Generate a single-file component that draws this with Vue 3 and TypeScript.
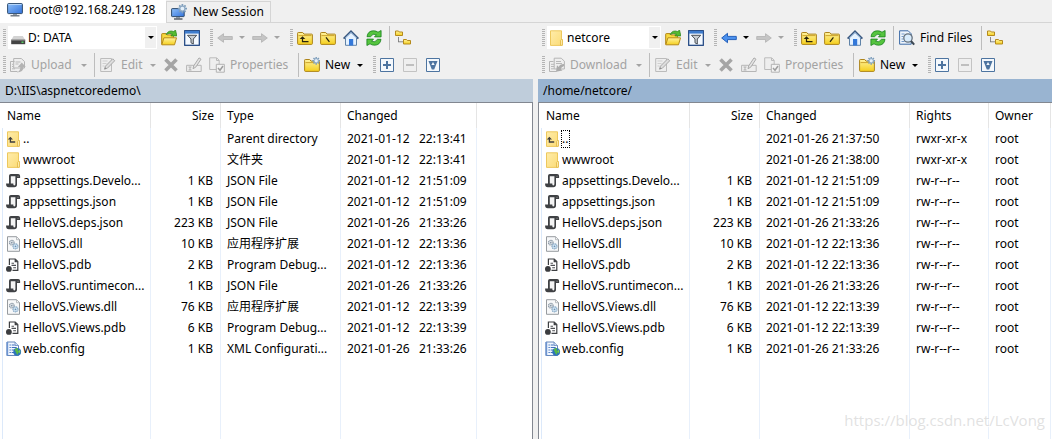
<script setup lang="ts">
type Kind = 'parent' | 'folder' | 'json' | 'dll' | 'pdb' | 'config'

interface Tool {
  id: string
  icon?: string
  label?: string
  title?: string
  width?: string
  caret?: boolean
  off?: boolean
  kind: 'grip' | 'sep' | 'button' | 'combo'
}

interface Column {
  key: string
  label: string
  width: string
}

interface Row {
  kind: Kind
  [key: string]: string
}

interface Pane {
  id: string
  active: boolean
  path: string
  drive: string
  driveIcon: string
  top: Tool[]
  bottom: Tool[]
  columns: Column[]
  rows: Row[]
}

const grip = (id: string): Tool => ({ id, kind: 'grip' })
const sep = (id: string): Tool => ({ id, kind: 'sep' })
const btn = (icon: string, title: string, extra: Partial<Tool> = {}): Tool => ({
  id: icon + title,
  kind: 'button',
  icon,
  title,
  ...extra,
})

function topBar(back: boolean, root: string, find: boolean): Tool[] {
  return [
    grip('g1'),
    { id: 'combo', kind: 'combo' },
    btn('open', 'Open directory'),
    btn('filter', 'Filter'),
    grip('g2'),
    btn(back ? 'back' : 'back-off', 'Back', { caret: true, off: !back, width: 'w-nav' }),
    btn('forward-off', 'Forward', { caret: true, off: true, width: 'w-nav' }),
    grip('g3'),
    btn('up', 'Parent directory'),
    btn(root, 'Root directory'),
    btn('home', 'Home directory'),
    btn('refresh', 'Refresh'),
    sep('s1'),
    ...(find ? [btn('find', 'Find', { label: 'Find Files', width: 'w-find' }), sep('s2')] : []),
    btn('tree', 'Synchronize browsing'),
  ]
}

function bottomBar(icon: string, label: string, width: string): Tool[] {
  return [
    grip('g1'),
    btn(icon, label, { label, width, caret: true, off: true }),
    sep('s1'),
    btn('edit', 'Edit', { label: 'Edit', width: 'w-edit', caret: true, off: true }),
    btn('delete', 'Delete', { off: true }),
    btn('rename', 'Rename', { off: true }),
    btn('props', 'Properties', { label: 'Properties', width: 'w-props', off: true }),
    sep('s2'),
    btn('new-folder', 'New', { label: 'New', width: 'w-new', caret: true }),
    grip('g2'),
    btn('plus', 'Select'),
    btn('minus', 'Unselect', { off: true }),
    btn('invert', 'Invert selection'),
  ]
}

const files: [Kind, string, string, string, string, string][] = [
  ['json', 'appsettings.Develo...', '1 KB', 'JSON File', '2021-01-12', '21:51:09'],
  ['json', 'appsettings.json', '1 KB', 'JSON File', '2021-01-12', '21:51:09'],
  ['json', 'HelloVS.deps.json', '223 KB', 'JSON File', '2021-01-26', '21:33:26'],
  ['dll', 'HelloVS.dll', '10 KB', '应用程序扩展', '2021-01-12', '22:13:36'],
  ['pdb', 'HelloVS.pdb', '2 KB', 'Program Debug...', '2021-01-12', '22:13:36'],
  ['json', 'HelloVS.runtimecon...', '1 KB', 'JSON File', '2021-01-26', '21:33:26'],
  ['dll', 'HelloVS.Views.dll', '76 KB', '应用程序扩展', '2021-01-12', '22:13:39'],
  ['pdb', 'HelloVS.Views.pdb', '6 KB', 'Program Debug...', '2021-01-12', '22:13:39'],
  ['config', 'web.config', '1 KB', 'XML Configurati...', '2021-01-26', '21:33:26'],
]

const panes: Pane[] = [
  {
    id: 'local',
    active: false,
    path: 'D:\\IIS\\aspnetcoredemo\\',
    drive: 'D: DATA',
    driveIcon: 'drive',
    top: topBar(false, 'root-local', false),
    bottom: bottomBar('upload', 'Upload', 'w-upload'),
    columns: [
      { key: 'name', label: 'Name', width: 'c-name' },
      { key: 'size', label: 'Size', width: 'c-size' },
      { key: 'type', label: 'Type', width: 'c-type' },
      { key: 'changed', label: 'Changed', width: 'c-changed-local' },
    ],
    rows: [
      { kind: 'parent', name: '..', size: '', type: 'Parent directory', changed: '2021-01-12   22:13:41' },
      { kind: 'folder', name: 'wwwroot', size: '', type: '文件夹', changed: '2021-01-12   22:13:41' },
      ...files.map(([kind, name, size, type, date, time]): Row => ({
        kind, name, size, type, changed: `${date}   ${time}`,
      })),
    ],
  },
  {
    id: 'remote',
    active: true,
    path: '/home/netcore/',
    drive: 'netcore',
    driveIcon: 'folder',
    top: topBar(true, 'root-remote', true),
    bottom: bottomBar('download', 'Download', 'w-download'),
    columns: [
      { key: 'name', label: 'Name', width: 'c-name' },
      { key: 'size', label: 'Size', width: 'c-size' },
      { key: 'changed', label: 'Changed', width: 'c-changed-remote' },
      { key: 'rights', label: 'Rights', width: 'c-rights' },
      { key: 'owner', label: 'Owner', width: 'c-owner' },
    ],
    rows: [
      { kind: 'parent', name: '..', size: '', changed: '2021-01-26 21:37:50', rights: 'rwxr-xr-x', owner: 'root' },
      { kind: 'folder', name: 'wwwroot', size: '', changed: '2021-01-26 21:38:00', rights: 'rwxr-xr-x', owner: 'root' },
      ...files.map(([kind, name, size, , date, time]): Row => ({
        kind, name, size, changed: `${date} ${time}`, rights: 'rw-r--r--', owner: 'root',
      })),
    ],
  },
]
</script>

<template>
  <div class="app">
    <svg class="defs" width="0" height="0" aria-hidden="true">
      <defs>
        <linearGradient id="gy" x1="0" y1="0" x2="0" y2="1">
          <stop offset="0" stop-color="#fff3a0" /><stop offset="1" stop-color="#f5cf1c" />
        </linearGradient>
        <linearGradient id="gs" x1="0" y1="0" x2="1" y2="1">
          <stop offset="0" stop-color="#8fc0f8" /><stop offset="1" stop-color="#3272dc" />
        </linearGradient>
        <linearGradient id="gf" x1="0" y1="0" x2="1" y2="1">
          <stop offset="0" stop-color="#ffecaa" /><stop offset="1" stop-color="#fbdc78" />
        </linearGradient>
        <g id="ybase">
          <path d="M.6 13.4V3.2q0-.7.7-.7h4.4l1.3 1.6h7.7q.7 0 .7.7v8.6q0 1-.9 1H1.4q-.8 0-.8-1z" fill="url(#gy)" stroke="#ad841c" />
          <path d="M1.5 5.6h13" stroke="#c79d25" stroke-width=".9" />
        </g>
        <g id="gear">
          <path d="M0-4.6V4.6M-4.6 0H4.6M-3.2-3.2 3.2 3.2M-3.2 3.2 3.2-3.2" stroke="#7d9dbb" stroke-width="1.7" />
          <circle r="2.5" fill="#e4f0fa" stroke="#8faac4" stroke-width="1.1" />
        </g>
        <g id="mini">
          <path d="M.5 6V1.5h3l.8 1h3.2V6z" fill="url(#gy)" stroke="#b58a1c" />
        </g>
      </defs>

      <symbol id="i-monitor" viewBox="0 0 16 16">
        <rect x=".6" y="1.6" width="14.8" height="10" rx=".8" fill="url(#gs)" stroke="#2f4c6d" />
        <path d="M1.5 2.5h13" stroke="#b5d6fb" />
        <path d="M6 12h4v1.5H6z" fill="#8e98a3" /><path d="M3.5 13.8h9" stroke="#606a75" stroke-width="1.3" />
      </symbol>
      <symbol id="i-monitor-new" viewBox="0 0 16 16">
        <rect x=".6" y="4.6" width="12.6" height="8" rx=".6" fill="url(#gs)" stroke="#2f4c6d" />
        <path d="M5 13h4v1.4H5z" fill="#8e98a3" /><path d="M3 15h8.5" stroke="#404a55" stroke-width="1.3" />
        <g transform="translate(11.4 4.6)"><use href="#gear" /></g>
      </symbol>
      <symbol id="i-drive" viewBox="0 0 16 16">
        <path d="M3.6 6h9.2l2.4 4H1.2z" fill="#d3d3d3" /><path d="M1.2 9.8h14v4.4h-14z" fill="#444" />
        <path d="M1.2 10h14" stroke="#999" /><path d="M11.5 12.2h2" stroke="#5be466" stroke-width="1.3" />
      </symbol>
      <symbol id="i-folder" viewBox="0 0 16 16">
        <path d="M1.5.8H12.500V15.400H1.5z" fill="url(#gf)" stroke="#edc85d" />
        <path d="M11.5 15.300V10.300l.8-.8h1.200V15.300z" fill="#ffe9a3" stroke="#e3bb4b" stroke-width=".9" />
      </symbol>
      <symbol id="i-parent" viewBox="0 0 16 16">
        <use href="#i-folder" />
        <path d="M4.4 7.2V11h4.8" stroke="#3d3d3d" stroke-width="1.3" fill="none" /><path d="M1.8 8.6 4.4 5.7 7 8.6z" fill="#3d3d3d" />
      </symbol>
      <symbol id="i-json" viewBox="0 0 16 16">
        <path d="M4 11V2.500h6.500V12z" fill="#f4f4f4" />
        <path d="M3 10.500V3q0-1.900 1.900-1.900h7.200q2 0 2 2V5H11v6.500q0 2.700-2.700 2.700H2.800Q.1 14.200.1 11v-.5h7.200q-.1 1.900 1 1.900t1.100-1.400V3.200H4.800v7.300z" fill="#3f4144" />
        <path d="M11.400 3.900V3q.7-.8 1.300 0v.9z" fill="#777" />
      </symbol>
      <symbol id="i-dll" viewBox="0 0 16 16">
        <path d="M1.5.7h9l3 3v11.6h-12z" fill="#f7f8f9" stroke="#979b9f" /><path d="M10.5.7v3h3z" fill="#fff" stroke="#a9adb1" stroke-width=".8" />
        <circle cx="5.8" cy="6.7" r="2.3" fill="#dfe5ea" stroke="#8c98a5" stroke-width="1.2" stroke-dasharray="1.2 .5" /><circle cx="5.8" cy="6.7" r=".8" fill="#768696" />
        <circle cx="9.5" cy="10.3" r="2.5" fill="#d8e9f6" stroke="#82a5c3" stroke-width="1.2" stroke-dasharray="1.2 .5" /><circle cx="9.5" cy="10.3" r=".9" fill="#6c91b4" />
      </symbol>
      <symbol id="i-pdb" viewBox="0 0 16 16">
        <path d="M3.4 8V2h5.800l2.600 2.600v8.800H6.500" fill="#fff" stroke="#3d3f42" stroke-width="1.2" /><path d="M8.600 1.800V5.200h3.200z" fill="#3d3f42" />
        <path d="M5.500 6.2h2.500M5.500 8.400h4.500M7.200 10.700h2.800" stroke="#4c4e52" stroke-width="1.1" />
        <circle cx="2.900" cy="11.900" r="2.900" fill="#3b3d40" />
      </symbol>
      <symbol id="i-config" viewBox="0 0 16 16">
        <path d="M1 1h8l3.5 3.5v10H1z" fill="#f1f7ff" stroke="#6687ba" /><path d="M.5 1h1.7v13.7H.5z" fill="#6d94d0" />
        <path d="M3.5 4h1.3M3.5 6.5h1.3M3.5 9h1.3M3.5 11.5h1.3M5.7 4h3M5.7 6.5h5M5.7 9h3M5.7 11.5h2.5" stroke="#3f6fbd" />
        <path d="M9 1v3.5h3.5" fill="#cfe0f7" stroke="#6687ba" stroke-width=".8" />
        <circle cx="11.2" cy="10.8" r="3.9" fill="#2d73bb" /><path d="M8.6 8.5q1.6-2 3.4-1.500l-.4 2.1 1.6 1.4-1.9 3.4-1.3-2.3z" fill="#58b947" /><path d="M13.2 8.2q1.9 1.7.8 4.2l-1.3-1.7z" fill="#79cc56" />
      </symbol>

      <symbol id="i-open" viewBox="0 0 16 16">
        <path d="M.7 14.4V4.2q0-.6.6-.6H5l1 1.3h6.4v3" fill="#f8d93e" stroke="#b08417" />
        <path d="m.8 14.8 2.1-7h12.6l-2 7z" fill="url(#gy)" stroke="#b78b18" />
        <path d="M5 4.4Q7.8-.3 12.6 1.5L14.5.1l1.4 5.8h-6L11.4 4Q8.3 2.7 5 4.4z" fill="#55bb32" stroke="#25811a" stroke-width=".7" />
      </symbol>
      <symbol id="i-filter" viewBox="0 0 16 16">
        <rect x=".7" y=".7" width="14.6" height="14.6" fill="#f4f9ff" stroke="#173e7d" stroke-width="1.2" /><path d="M1 1h14v2.6H1z" fill="#3e7ccd" />
        <path d="M3.5 5.3h9.2L9.3 9v5l-2.3-1.2V9z" fill="#c9ced3" stroke="#4b5157" />
      </symbol>
      <symbol id="i-back-off" viewBox="0 0 16 16"><path d="M.7 8 6.5 3.7V6.5h8.8v3H6.5v2.8z" fill="#c5c5c5" stroke="#b1b1b1" stroke-width=".8" /></symbol>
      <symbol id="i-forward-off" viewBox="0 0 16 16"><path d="M15.3 8 9.5 3.7V6.5H.7v3h8.8v2.8z" fill="#c5c5c5" stroke="#b1b1b1" stroke-width=".8" /></symbol>
      <symbol id="i-back" viewBox="0 0 16 16"><path d="M.7 8 6.5 3.3V6.4h8.8v3.2H6.5v3.1z" fill="#4b91ee" stroke="#1856b3" stroke-width=".9" /></symbol>
      <symbol id="i-up" viewBox="0 0 16 16">
        <use href="#ybase" /><path d="M5.5 8v3.6h6" fill="none" stroke="#28230d" stroke-width="1.2" /><path d="M2.7 9 5.5 6.3 8.3 9z" fill="#28230d" />
      </symbol>
      <symbol id="i-root-local" viewBox="0 0 16 16"><use href="#ybase" /><path d="m6 7.3 3.4 4.5" stroke="#28230d" stroke-width="1.2" /></symbol>
      <symbol id="i-root-remote" viewBox="0 0 16 16"><use href="#ybase" /><path d="M9.4 7.3 6 11.8" stroke="#28230d" stroke-width="1.2" /></symbol>
      <symbol id="i-home" viewBox="0 0 16 16">
        <path d="M2.5 7.5 8 2.3l5.5 5.2v7.8h-11z" fill="#e5f2ff" stroke="#6083a8" />
        <path d="M6 9h4.2v6.5H6z" fill="#3378d9" /><path d="M.6 8.7 8 1.3l7.4 7.4" fill="none" stroke="#38577e" stroke-width="1.8" /><path d="M2.2 8 8 2.3 13.8 8" fill="none" stroke="#a8c8ed" stroke-width=".8" />
      </symbol>
      <symbol id="i-refresh" viewBox="0 0 16 16">
        <path id="rf" d="M1 6.7Q1.8.8 7.5.8q2.7 0 4.5 1.4L15.1.5v6.4H8.5l1.9-2.2Q6.8 2.9 4.5 6.7z" fill="#55c43e" stroke="#16821c" stroke-width=".8" />
        <use href="#rf" transform="rotate(180 8 8)" />
      </symbol>
      <symbol id="i-tree" viewBox="0 0 16 16">
        <use href="#mini" x="0" y="-.5" /><use href="#mini" x="8" y="8" /><path d="M3.5 7.5v4.3M3.5 11.8h4.5" stroke="#222" stroke-dasharray="1 1" />
      </symbol>
      <symbol id="i-find" viewBox="0 0 16 16">
        <path d="M.6.8h8.6l3 3v10.4H.6z" fill="#eef4fb" stroke="#3b6aa7" /><path d="M2.5 4h3M2.5 6.5h2M2.5 9h2M2.5 11.5h3" stroke="#7299c8" />
        <circle cx="9" cy="8" r="4.2" fill="#d8ebfb" stroke="#65717d" stroke-width="1.3" /><path d="m12 11 3.2 3.7" stroke="#3d4853" stroke-width="2" />
      </symbol>
      <symbol id="i-upload" viewBox="0 0 16 16">
        <path d="M.5 4.5h4M.5 4.5v10h7M3.7 1.5h7.6l3.2 3V11H3.7z" fill="#eee" stroke="#b5b5b5" /><path d="M5.5 5h5M5.5 7h3M2 7.3h1M2 9.5h1M2 11.8h3" stroke="#b9b9b9" />
        <path d="M6.5 15.5q4-1.4 3.8-5.5H7.8l4-4.5 4 4.5h-2.3q.4 5.3-7 5.5z" fill="#b3b3b3" />
      </symbol>
      <symbol id="i-download" viewBox="0 0 16 16">
        <path d="M.5 4.5h4M.5 4.5v10h7M5.2 1.2h7l3.2 3V12H5.2z" fill="#eee" stroke="#b5b5b5" /><path d="M7 4.5h5M7 6.5h6M2 7.3h3M2 9.5h3M2 11.8h3" stroke="#b9b9b9" />
        <path d="M15 7q-4.5.2-5.2 3L8 8.3 7 14.8l6.5-1.2-1.8-1.7q.7-2.2 3.3-3z" fill="#ababab" />
      </symbol>
      <symbol id="i-edit" viewBox="0 0 16 16">
        <path d="M.7 1.5h10.8v13H.7z" fill="#eee" stroke="#bcbcbc" /><path d="M2.5 4h5M2.5 6.5h4M2.5 9h2" stroke="#cfcfcf" />
        <path d="m4.5 12.2.9-3L12.7 1.8l2 2-7.3 7.4z" fill="#ddd" stroke="#a9a9a9" /><path d="m4.5 12.2.6-1.9 1.3 1.3z" fill="#888" />
      </symbol>
      <symbol id="i-delete" viewBox="0 0 16 16"><path d="m2.5 2.5 11 11M13.5 2.5l-11 11" stroke="#a5a5a5" stroke-width="3.6" /></symbol>
      <symbol id="i-rename" viewBox="0 0 16 16">
        <path d="M.6 8.3h14.6v6.2H.6z" fill="#eee" stroke="#b6b6b6" /><path d="M2.5 10h3M2.5 13h3M4 10v3" stroke="#aaa" stroke-width=".9" />
        <path d="m7 11.7.7-2.8L13 .9l2 1.3-5.3 8z" fill="#e4e4e4" stroke="#ababab" />
      </symbol>
      <symbol id="i-props" viewBox="0 0 16 16">
        <path d="M.7.8h7l2.5 2.5v9.2H.7zM7.5 1v2.5H10" fill="#eee" stroke="#bbb" /><path d="M7.3 7.3h8v7.9h-8z" fill="#f3f3f3" stroke="#b2b2b2" /><path d="m9 11 2 2.2L14 9" fill="none" stroke="#9d9d9d" stroke-width="1.5" />
      </symbol>
      <symbol id="i-new-folder" viewBox="0 0 16 16"><use href="#ybase" /><g transform="translate(12.2 3.8) scale(.85)"><use href="#gear" /></g></symbol>
      <symbol id="i-plus" viewBox="0 0 16 16"><path d="M.5 1.500h13v13H.5z" fill="#f4f8fc" stroke="#4d74a0" /><path d="M3 8h8M7 4v8" stroke="#4d74a0" stroke-width="2" /></symbol>
      <symbol id="i-minus" viewBox="0 0 16 16"><path d="M.5 1.500h13v13H.5z" fill="#efefef" stroke="#c3c3c3" /><path d="M3 8h8" stroke="#bfbfbf" stroke-width="2" /></symbol>
      <symbol id="i-invert" viewBox="0 0 16 16"><path d="M.5 1.500h13v13H.5z" fill="#f4f8fc" stroke="#4d74a0" /><path d="M2.500 4h9L8.200 12.500H5.800z" fill="#4d74a0" /><path d="M5.300 8 7 5l1.700 3z" fill="#f4f8fc" /></symbol>
    </svg>

    <nav class="tabs" aria-label="Sessions">
      <button class="tab current" type="button"><svg class="icon"><use href="#i-monitor" /></svg>root@192.168.249.128</button>
      <button class="tab" type="button"><svg class="icon"><use href="#i-monitor-new" /></svg>New Session</button>
    </nav>

    <main class="panes">
      <section v-for="pane in panes" :key="pane.id" class="pane" :class="[pane.id, { active: pane.active }]">
        <div v-for="(bar, b) in [pane.top, pane.bottom]" :key="b" class="toolbar" role="toolbar">
          <template v-for="tool in bar" :key="tool.id">
            <span v-if="tool.kind === 'grip'" class="grip"></span>
            <span v-else-if="tool.kind === 'sep'" class="sep"></span>
            <span v-else-if="tool.kind === 'combo'" class="combo">
              <svg class="icon"><use :href="'#i-' + pane.driveIcon" /></svg>
              <select :aria-label="pane.id + ' directory'">
                <option>{{ pane.drive }}</option>
              </select>
              <span class="drop"><i class="caret"></i></span>
            </span>
            <button v-else class="tool" :class="[tool.width, { off: tool.off }]" type="button" :disabled="tool.off" :aria-label="tool.title">
              <svg class="icon"><use :href="'#i-' + tool.icon" /></svg>
              <span v-if="tool.label" class="label">{{ tool.label }}</span>
              <i v-if="tool.caret" class="caret"></i>
            </button>
          </template>
        </div>

        <div class="path">{{ pane.path }}</div>

        <div class="list">
          <table>
            <colgroup>
              <col v-for="col in pane.columns" :key="col.key" :class="col.width" />
              <col />
            </colgroup>
            <thead>
              <tr>
                <th v-for="col in pane.columns" :key="col.key" :class="col.key" scope="col">{{ col.label }}</th>
                <td class="rest"></td>
              </tr>
            </thead>
            <tbody>
              <tr v-for="row in pane.rows" :key="row.name" class="row">
                <td v-for="col in pane.columns" :key="col.key" :class="col.key">
                  <span v-if="col.key === 'name'" class="file">
                    <svg class="icon"><use :href="'#i-' + row.kind" /></svg>
                    <span class="text" :class="{ focus: pane.active && row.kind === 'parent' }">{{ row.name }}</span>
                  </span>
                  <template v-else>{{ row[col.key] }}</template>
                </td>
                <td class="rest"></td>
              </tr>
              <tr class="filler">
                <td v-for="col in pane.columns" :key="col.key" :class="col.key"></td>
                <td class="rest"></td>
              </tr>
            </tbody>
          </table>
        </div>
      </section>
    </main>
    <div class="watermark">https://blog.csdn.net/LcVong</div>
  </div>
</template>

<style>
body {
  margin: 0;
  background: #f0f0f0;
}
</style>

<style scoped>
.app {
  position: relative;
  display: flex;
  flex-direction: column;
  min-height: 100vh;
  background: #f0f0f0;
  color: #000;
  font: 12px/18px "Noto Sans", "Noto Sans CJK SC", sans-serif;
}
.defs {
  position: absolute;
}
button,
select {
  margin: 0;
  padding: 0;
  border: 0;
  background: none;
  color: inherit;
  font: inherit;
}
.icon {
  flex: none;
  width: 16px;
  height: 16px;
}
.tabs {
  display: flex;
  height: 24px;
  box-sizing: border-box;
  background: linear-gradient(#d5d5d5, #d5d5d5) 0 22px / 100% 1px no-repeat;
}
.tab {
  display: flex;
  align-items: center;
  gap: 6px;
  height: 22px;
  margin-top: 1px;
  padding: 0 6px 0 4px;
  box-sizing: border-box;
  border: 1px solid #d5d5d5;
  white-space: nowrap;
}
.tab.current {
  gap: 6px;
  width: 166px;
  height: 23px;
  margin-top: 0;
  padding: 0 0 3px 7px;
  border: 0;
  background: #fff;
}
.panes {
  flex: 1;
  display: grid;
  grid-template-columns: 533fr 514fr;
  column-gap: 5px;
}
.pane {
  display: flex;
  flex-direction: column;
  min-width: 0;
}
.toolbar {
  display: flex;
  align-items: center;
  height: 28px;
  padding-left: 3px;
  overflow: hidden;
}
.toolbar:first-child {
  height: 27px;
}
.remote .toolbar {
  padding-left: 4px;
}
.grip {
  flex: none;
  width: 3px;
  height: 18px;
  margin: 0 1px 0 6px;
  background: repeating-linear-gradient(#b4b4b4 0 1px, transparent 1px 2px);
}
.grip:first-child {
  margin-left: 0;
}
.sep {
  flex: none;
  width: 1px;
  height: 24px;
  margin: 0 2px 0 3px;
  background: #bdbdbd;
}
.combo {
  display: flex;
  align-items: center;
  box-sizing: border-box;
  width: 149px;
  height: 23px;
  margin: 0 1px;
  padding: 1px 1px 1px 2px;
  background: #fff;
}
.remote .combo {
  width: 114px;
}
.combo select {
  flex: 1;
  min-width: 0;
  padding-left: 2px;
  appearance: none;
  outline: 0;
}
.drop {
  display: flex;
  align-items: center;
  justify-content: center;
  align-self: stretch;
  width: 11px;
  background: #f0f0f0;
}
.tool {
  flex: none;
  display: flex;
  align-items: center;
  width: 23px;
  height: 24px;
  padding: 0 4px 0 3px;
  box-sizing: border-box;
  white-space: nowrap;
}
.off {
  color: #a3a3a3;
}
.label {
  margin-left: 5px;
}
.caret {
  flex: none;
  width: 0;
  margin-left: auto;
  border: 3px solid transparent;
  border-top-color: currentColor;
  border-bottom: 0;
}
.drop .caret {
  margin: 0;
}
.w-nav { width: 35px; }
.w-find { width: 82px; }
.w-upload { width: 84px; }
.w-download { width: 100px; }
.w-edit { width: 63px; }
.w-props { width: 89px; }
.w-new { width: 66px; }

.path {
  height: 23px;
  padding-left: 5px;
  line-height: 23px;
  background: #bfcddb;
  white-space: nowrap;
}
.active .path {
  background: #99b4d1;
}
.list {
  flex: 1;
  display: flex;
  flex-direction: column;
  background: #fff;
  border: 0 solid #828790;
  border-top-width: 1px;
  border-right-width: 1px;
  overflow: hidden;
}
.remote .list {
  border-right-width: 0;
  border-left-width: 1px;
}
table {
  flex: 1;
  width: 100%;
  table-layout: fixed;
  border-spacing: 0;
}
.c-name { width: 151px; }
.c-size { width: 70px; }
.c-type { width: 120px; }
.c-changed-local { width: 136px; }
.c-changed-remote { width: 150px; }
.c-rights { width: 79px; }
.c-owner { width: 62px; }

th,
td {
  padding: 0 0 0 6px;
  border-right: 1px solid #e8f0fb;
  font-weight: normal;
  text-align: left;
  white-space: pre;
  overflow: hidden;
}
th {
  height: 25px;
  border-color: #e5e5e5;
}
th.name {
  padding-left: 7px;
}
.row td {
  height: 21px;
}
.rest {
  padding: 0;
  border: 0;
}
td.name {
  background: linear-gradient(#dce9fa, #dce9fa) 2px 0 / 1px 100% no-repeat;
}
th.size {
  padding: 0 6px 0 0;
  text-align: right;
}
td.size {
  padding: 0 7px 0 0;
  text-align: right;
}
.file {
  display: flex;
  align-items: center;
}
.text {
  padding: 0 1px;
}
.focus {
  outline: 1px dotted #000;
  outline-offset: -1px;
  padding-right: 2px;
}
.watermark {
  position: absolute;
  right: 7px;
  bottom: 8px;
  color: rgba(205, 205, 205, 0.6);
  font: 15px/22px "Open Sans", sans-serif;
  text-shadow: 1px 1px 1px #fff;
  pointer-events: none;
}
</style>
